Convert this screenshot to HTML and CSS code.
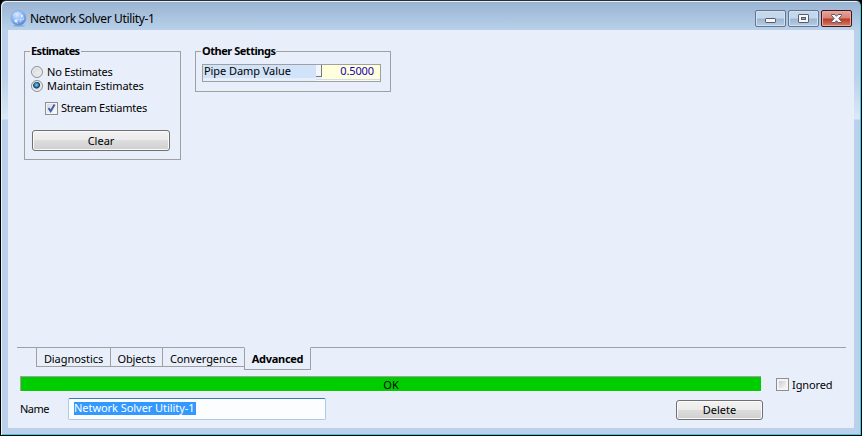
FILE: index.html
```html
<!DOCTYPE html>
<html lang="en">
<head>
<meta charset="utf-8">
<title>Network Solver Utility-1</title>
<link rel="stylesheet" href="styles.css">
</head>
<body>
<div class="window">
  <header class="titlebar">
    <svg class="app-icon" width="17" height="17" viewBox="0 0 17 17">
      <defs><radialGradient id="globe" cx=".4" cy=".3" r=".75"><stop offset="0" stop-color="#d5e8ff"/><stop offset=".5" stop-color="#8db8f5"/><stop offset="1" stop-color="#527bd2"/></radialGradient></defs>
      <ellipse cx="9" cy="15.7" rx="6" ry="1" fill="#7e9cc0" opacity=".6"/>
      <circle cx="8.5" cy="8" r="7.5" fill="url(#globe)" stroke="#7b9fe2" stroke-width=".6"/>
      <path d="M3 5L7 3L12 5L14 9L10 12M12 5L10 12M5 10L14 9M5 10L8 14" fill="none" stroke="#eef7ff" stroke-width=".6" opacity=".8"/>
      <circle cx="6" cy="11" r="1.6" fill="#fff" opacity=".7"/><circle cx="12" cy="6" r="1" fill="#fff" opacity=".8"/>
    </svg>
    <h1 class="title">Network Solver Utility-1</h1>
    <div class="controls">
      <button class="control" aria-label="Minimize"><svg width="29" height="15" viewBox="0 0 29 15"><rect x="9.5" y="7.5" width="10" height="4" rx=".6" fill="#f8f8f8" stroke="#565b70"/></svg></button>
      <button class="control" aria-label="Maximize"><svg width="29" height="15" viewBox="0 0 29 15"><rect x="9.5" y="3.5" width="10" height="8" rx=".6" fill="#f8f8f8" stroke="#565b70"/><rect x="12.5" y="6.5" width="4" height="2" fill="#8fabcb" stroke="#565b70"/></svg></button>
      <button class="control close" aria-label="Close"><svg width="29" height="15" viewBox="0 0 29 15"><path d="M9.5 3.5h3.4l1.6 1.8 1.6-1.8h3.4v1l-2.7 3 2.7 3v1h-3.4l-1.6-1.8-1.6 1.8H9.500v-1l2.700-3-2.700-3z" fill="#f8f8f8" stroke="#565b70"/></svg></button>
    </div>
  </header>
  <main class="client">
    <div class="groups">
      <section class="group estimates">
        <h2 class="legend">Estimates</h2>
        <label class="option"><span class="radio"></span><span class="t-none">No Estimates</span></label>
        <label class="option"><span class="radio selected"></span><span class="t-maintain">Maintain Estimates</span></label>
        <label class="option nested"><span class="check"><svg width="11" height="11" viewBox="0 0 11 11"><path d="M2.500 5L4.700 8.200L8.600 1.500" fill="none" stroke="#465ca5" stroke-width="2"/></svg></span><span class="t-stream">Stream Estiamtes</span></label>
        <button class="button clear">Clear</button>
      </section>
      <section class="group settings">
        <h2 class="legend">Other Settings</h2>
        <div class="matrix">
          <div class="matrix-row"><span class="cell-label">Pipe Damp Value</span><span class="cell-grip"></span><span class="cell-value">0.5000</span></div>
          <div class="matrix-foot"></div>
        </div>
      </section>
    </div>
    <nav class="tabs">
      <span class="tab-lead"></span>
      <a class="tab diagnostics">Diagnostics</a>
      <a class="tab objects">Objects</a>
      <a class="tab convergence">Convergence</a>
      <a class="tab active">Advanced</a>
      <span class="tab-rest"></span>
    </nav>
    <div class="status-row">
      <div class="status">OK</div>
      <label class="ignored"><span class="check empty"></span><span class="t-ignored">Ignored</span></label>
    </div>
    <div class="name-row">
      <span class="name-label">Name</span>
      <div class="name-input"><span class="selection">Network Solver Utility-1</span></div>
      <button class="button delete">Delete</button>
    </div>
  </main>
</div>
</body>
</html>
```
FILE: styles.css
```css
* { box-sizing: border-box; }
body { margin: 0; background: #000; font: 11px/14px "Noto Sans", "Open Sans", sans-serif; color: #000; overflow: hidden; }
h1, h2 { margin: 0; font-size: inherit; }
button { font: inherit; color: inherit; padding: 0; }
span, a, h1, h2 { white-space: nowrap; }

.window {
  width: 862px; height: 436px; padding: 1px 6px 6px 7px;
  border: 1px solid #000; border-top-color: #292c33; border-radius: 6px 6px 0 0;
  background: linear-gradient(#98b3d1, #b9d1ea 29px, #b9d1ea 75px, #dbe8f6 118px, #b9d1ea 119px);
  box-shadow: inset 1px 1px #e5f2fc, inset -1px -1px #30cfec;
}
.titlebar { height: 28px; display: flex; align-items: flex-start; padding: 8px 3px 0 2px; }
.app-icon { flex: none; }
.title { font-size: 12px; line-height: 16px; margin-top: 1px; font-weight: 400; margin-left: 3px; letter-spacing: -.35px; }
.controls { display: flex; gap: 2px; margin-left: auto; }
.control {
  width: 31px; height: 17px; border: 1px solid #65758e; border-radius: 2px;
  background: linear-gradient(#c5d7ea 0 7px, #9cb7d4 8px, #b6cce4);
  box-shadow: inset 0 0 0 1px #d1e2f2;
}
.control svg { display: block; }
.control.close { border-color: #45111b; background: linear-gradient(#e4a69c, #d78476 7px, #b93a22 8px, #d47e68); box-shadow: inset 0 0 0 1px #e6aaa0; }

.client { width: 846px; height: 398px; background: #e8effa; display: flex; flex-direction: column; }
.groups { display: flex; align-items: flex-start; gap: 14px; padding: 21px 16px 0; flex: 1; }
.group { border: 1px solid #a0a0a0; padding: 0 6px; }
.legend { width: max-content; margin: -9px 0 0 -1px; padding: 0 1px; line-height: 15px; background: #e8effa; font-weight: 700; letter-spacing: -.47px; }
.estimates .legend { letter-spacing: -.6px; }
.estimates { width: 157px; height: 109px; }
.settings { width: 196px; height: 41px; }
.option { display: flex; align-items: center; height: 14px; gap: 4px; }
.estimates .legend + .option { margin-top: 7px; }
.radio { width: 12px; height: 12px; border: 1px solid #8e8f8f; border-radius: 50%; background: radial-gradient(circle at 60% 60%, #eee, #cbcfd5); box-shadow: inset 0 0 0 1px #f4f4f4; }
.radio.selected { background: radial-gradient(circle at 45% 40%, #78d2ee 0, #287fae 2px, #153659 3px, #d8dfe7 4px); }
.t-none { letter-spacing: -.2px; }
.t-maintain { letter-spacing: -.1px; }
.t-stream { letter-spacing: -.25px; }
.nested { margin: 8px 0 0 14px; gap: 3px; }
.check { width: 13px; height: 13px; border: 1px solid #8e8f8f; background: linear-gradient(135deg, #d0d5df, #fff); box-shadow: inset 0 0 0 1px #f4f4f4; }
.check svg { display: block; }
.check.empty { background: linear-gradient(135deg, #bcc2d0, #f5f5f5 80%); box-shadow: inset 0 0 0 2px #f4f4f4; }
.button {
  display: block; border: 1px solid #707070; border-radius: 3px; text-align: center; line-height: 18px;
  background: linear-gradient(#f2f2f2, #ebebeb 48%, #dddddd 50%, #cfcfcf); box-shadow: inset 0 0 0 1px #fafafa;
}
.clear { width: 138px; height: 21px; margin: 15px 0 0 1px; line-height: 20px; }

.matrix { width: 179px; height: 18px; margin-top: 6px; border: 1px solid #a0a0a0; background: #e8effa; }
.matrix-row { display: flex; height: 14px; }
.cell-label { width: 113px; padding-left: 1px; line-height: 12px; background: #d1e3f9; border-bottom: 1px solid #e8effa; letter-spacing: -.07px; }
.cell-grip { width: 6px; height: 12px; border: solid #777; border-width: 0 1px 1px 0; background: #f2f5fb; }
.cell-value { flex: 1; background: #ffffdc; color: #1400b8; text-align: right; padding-right: 6px; line-height: 12px; letter-spacing: -.1px; }
.matrix-foot { height: 2px; margin-left: 113px; background: #f7f9fd; border-top: 1px solid #d1dded; }

.tabs { display: flex; align-items: flex-start; height: 23px; margin: 0 8px 0 9px; }
.tab-lead { width: 19px; border-top: 1px solid #a0a0a0; }
.tab-rest { flex: 1; border-top: 1px solid #a0a0a0; }
.tab { height: 20px; border: 1px solid #a0a0a0; border-right: 0; text-align: center; line-height: 22px; letter-spacing: -.06px; }
.objects { letter-spacing: -.15px; }
.diagnostics { width: 74px; }
.objects { width: 52px; }
.convergence { width: 82px; }
.tab.active { width: 67px; height: 23px; border-top-color: transparent; border-right: 1px solid #a0a0a0; font-weight: 700; letter-spacing: -.3px; }

.status-row { display: flex; align-items: flex-start; height: 22px; padding: 6px 0 0 12px; }
.status { width: 741px; height: 15px; border: solid #a0a0a0; border-width: 1px 0 0 1px; background: #00cd00; text-align: center; line-height: 15px; box-shadow: 0 1px #f5f8fd; }
.ignored { display: flex; gap: 3px; margin: 2px 0 0 15px; }
.t-ignored { letter-spacing: -.1px; }
.name-row { display: flex; align-items: flex-start; height: 36px; padding: 6px 0 0 12px; }
.name-label { width: 48px; padding-top: 4px; letter-spacing: -.5px; }
.name-input { width: 258px; height: 22px; padding: 3px 5px; border: 1px solid #abcce6; border-top-color: #3d7bad; border-radius: 2px; background: #fcfdfe; }
.selection { display: block; width: 122px; height: 13px; line-height: 12px; background: #3399ff; color: #fff; letter-spacing: -.05px; }
.delete { width: 87px; height: 20px; margin: 2px 0 0 350px; }
```
